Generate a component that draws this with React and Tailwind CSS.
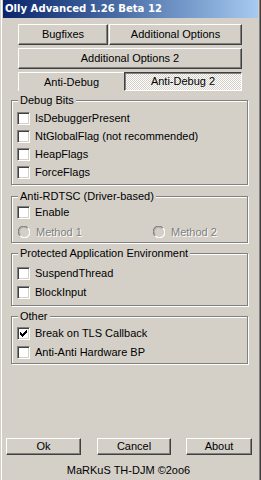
import React from "react";

const F = { fontFamily: '"Liberation Sans", Arial, sans-serif' };

function Btn({ children, className = "" }) {
  return (
    <div
      className={
        "flex items-center justify-center border border-t-white border-l-white border-r-[#404040] border-b-[#404040] shadow-[inset_-1px_-1px_#808080] text-black " +
        className
      }
    >
      {children}
    </div>
  );
}

function Check({ checked }) {
  const ys = [2, 3, 4, 3, 2, 1, 0];
  return (
    <div className="w-[13px] h-[13px] shrink-0 border border-t-[#808080] border-l-[#808080] border-r-white border-b-white shadow-[inset_1px_1px_#404040,inset_-1px_-1px_#d4d0c8] bg-white flex items-center justify-center">
      {checked && (
        <svg width="7" height="7" viewBox="0 0 7 7" shapeRendering="crispEdges">
          {ys.map((y, i) => (
            <rect key={i} x={i} y={y} width="1" height="3" fill="#000" />
          ))}
        </svg>
      )}
    </div>
  );
}

function Radio() {
  return (
    <svg width="12" height="12" viewBox="0 0 12 12" className="shrink-0">
      <circle cx="6" cy="6" r="5" fill="#d4d0c8" />
      <path d="M1.8 9.5 A5.2 5.2 0 0 1 9.5 1.8" fill="none" stroke="#808080" strokeWidth="1.2" />
      <path d="M2.6 8.6 A4 4 0 0 1 8.6 2.6" fill="none" stroke="#b0aca4" strokeWidth="1" />
      <path d="M10.2 2.5 A5.2 5.2 0 0 1 2.5 10.2" fill="none" stroke="#ffffff" strokeWidth="1.2" />
    </svg>
  );
}

function Row({ checked, children, className = "" }) {
  return (
    <div className={"flex items-center h-[18px] pl-[5px] " + className}>
      <Check checked={checked} />
      <span className="ml-[5px] leading-[13px]">{children}</span>
    </div>
  );
}

function Group({ title, className = "", children }) {
  return (
    <div
      className={
        "relative ml-[9px] w-[237px] border border-[#808080] shadow-[inset_1px_1px_#fff,1px_1px_#fff] flex flex-col " +
        className
      }
    >
      <span className="absolute left-[6px] -top-[7px] px-[2px] bg-[#d4d0c8] leading-[13px] whitespace-nowrap">
        {title}
      </span>
      {children}
    </div>
  );
}

export default function App() {
  return (
    <div
      style={F}
      className="w-[261px] h-[480px] bg-[#d4d0c8] text-[11px] text-black border-l border-l-[#d4d0c8] border-r border-r-[#404040] overflow-hidden select-none"
    >
      <div className="h-full border-l border-l-white border-r border-r-[#808080] flex flex-col">
        <div className="mx-[1px] h-[18px] bg-gradient-to-r from-[#0a246a] to-[#a6caf0] flex items-center pl-[2px]">
          <span
            className="text-white font-bold text-[10.1px] whitespace-nowrap"
            style={{ fontFamily: '"DejaVu Sans", Verdana, sans-serif' }}
          >
            Olly Advanced 1.26 Beta 12
          </span>
        </div>

        <div className="mt-[6px] ml-[16px] flex">
          <Btn className="w-[90px] h-[21px]">Bugfixes</Btn>
          <Btn className="ml-[1px] w-[133px] h-[21px]">Additional Options</Btn>
        </div>
        <Btn className="mt-[3px] ml-[16px] w-[224px] h-[21px]">Additional Options 2</Btn>

        <div className="mt-[3px] ml-[16px] flex h-[19px]">
          <div className="w-[106px] h-full flex items-center justify-center border-t border-l border-t-white border-l-white">
            Anti-Debug
          </div>
          <div className="w-[118px] h-full flex items-center justify-center border border-t-[#404040] border-l-[#404040] border-r-white border-b-white shadow-[inset_1px_1px_#808080] bg-[repeating-conic-gradient(#ffffff_0_25%,#d4d0c8_0_50%)] bg-[length:2px_2px]">
            Anti-Debug 2
          </div>
        </div>

        <Group title="Debug Bits" className="mt-[9px] h-[85px] pt-[8px]">
          <Row>IsDebuggerPresent</Row>
          <Row>NtGlobalFlag (not recommended)</Row>
          <Row>HeapFlags</Row>
          <Row>ForceFlags</Row>
        </Group>

        <Group title="Anti-RDTSC (Driver-based)" className="mt-[11px] h-[47px] pt-[6px]">
          <Row>Enable</Row>
          <div className="mt-[2px] h-[18px] flex items-center pl-[6px] text-[#808080] [text-shadow:1px_1px_#fff]">
            <div className="w-[135px] flex items-center">
              <Radio />
              <span className="ml-[6px] leading-[13px]">Method 1</span>
            </div>
            <div className="flex items-center">
              <Radio />
              <span className="ml-[6px] leading-[13px]">Method 2</span>
            </div>
          </div>
        </Group>

        <Group title="Protected Application Environment" className="mt-[10px] h-[53px] pt-[10px]">
          <Row>SuspendThread</Row>
          <Row className="mt-[1px]">BlockInput</Row>
        </Group>

        <Group title="Other" className="mt-[10px] h-[48px] pt-[7px]">
          <Row checked>Break on TLS Callback</Row>
          <Row className="mt-[1px]">Anti-Anti Hardware BP</Row>
        </Group>

        <div className="mt-[74px] ml-[4px] flex">
          <Btn className="w-[75px] h-[17px]">Ok</Btn>
          <Btn className="ml-[16px] w-[74px] h-[17px]">Cancel</Btn>
          <Btn className="ml-[15px] w-[66px] h-[17px]">About</Btn>
        </div>
        <div className="mt-[9px] h-[13px] leading-[13px] text-center pr-[4px]">
          MaRKuS TH-DJM ©2oo6
        </div>
      </div>
    </div>
  );
}
